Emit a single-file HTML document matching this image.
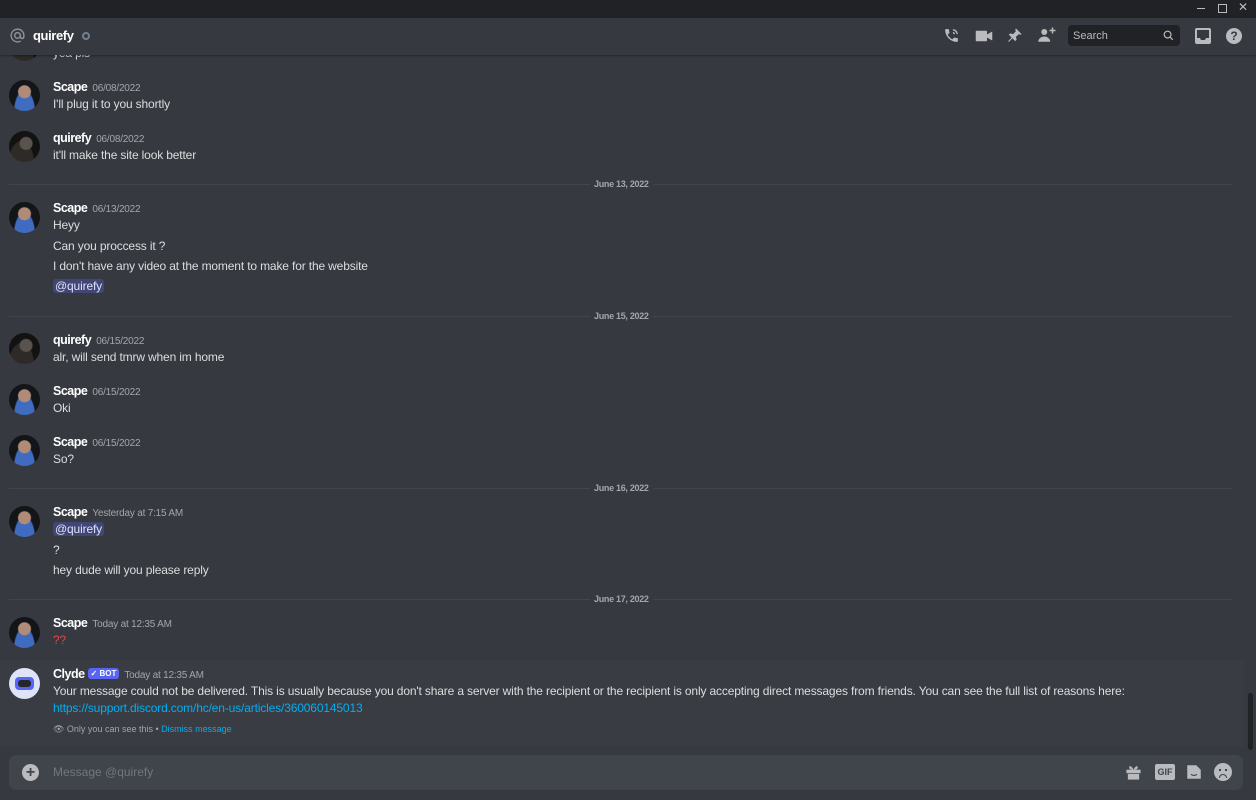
<!DOCTYPE html>
<html><head><meta charset="utf-8"><style>
*{margin:0;padding:0;box-sizing:border-box}
body{width:1256px;height:800px;background:#36393f;font-family:"Liberation Sans",sans-serif;position:relative;overflow:hidden;color:#dcddde}
.a{position:absolute}
.tb{left:0;top:0;width:1256px;height:18px;background:#202225}
.hd{left:0;top:18px;width:1256px;height:37px;background:#36393f;box-shadow:0 1px 2px rgba(0,0,0,.35);z-index:2}
.av{width:31px;height:31px;border-radius:50%;left:9px;overflow:hidden}
.sc{background:radial-gradient(circle at 50% 38%,#b08c78 0 6px,transparent 7px),radial-gradient(ellipse at 50% 105%,#3f6bc0 0 10px,transparent 11px),#141518}
.qu{background:radial-gradient(circle at 55% 40%,#5a524c 0 6px,transparent 7px),radial-gradient(ellipse at 40% 100%,#2d2a28 0 12px,transparent 13px),#121212}
.nm{font-size:12.5px;font-weight:bold;color:#fff;left:53px;letter-spacing:-.5px}
.ts{font-size:10px;color:#a3a6aa;font-weight:normal;margin-left:5px;letter-spacing:-.2px}
.tx{font-size:12px;color:#dcddde;left:53px;letter-spacing:-.15px;white-space:nowrap}
.dv{left:9px;width:1224px;height:1px;background:#42454a}
.dl{font-size:9px;font-weight:bold;color:#a3a6aa;background:#36393f;padding:0 4px;left:590px;letter-spacing:-.3px}
.mn{background:#414675;color:#dee0fc;padding:0 2px;border-radius:3px}
.ic{fill:#b9bbbe}
</style></head><body>
<div class="a tb"></div>
<div class="a" style="left:1197px;top:8px;width:8px;height:1px;background:#b9bbbe"></div>
<div class="a" style="left:1218px;top:4px;width:9px;height:9px;border:1px solid #b9bbbe"></div>
<div class="a" style="left:1238px;top:0;font-size:12px;color:#b9bbbe">✕</div>
<div class="a hd">
<svg class="a" style="left:9px;top:9px" width="17" height="17" viewBox="0 0 24 24"><path d="M12 2a10 10 0 1 0 5 18.7l-1-1.7A8 8 0 1 1 20 12v1.5a1.5 1.5 0 0 1-3 0V12a5 5 0 1 0-1.5 3.5A3.5 3.5 0 0 0 22 13.5V12A10 10 0 0 0 12 2zm0 13a3 3 0 1 1 0-6 3 3 0 0 1 0 6z" fill="#8e9297"/></svg>
<div class="a" style="left:33px;top:10px;font-size:13px;font-weight:bold;color:#fff;letter-spacing:-.4px">quirefy</div>
<div class="a" style="left:82px;top:14px;width:8px;height:8px;border-radius:50%;border:2px solid #747f8d"></div>
<svg class="a ic" style="left:943px;top:9px" width="17" height="17" viewBox="0 0 24 24"><path d="M6.6 10.8a15 15 0 0 0 6.6 6.6l2.2-2.2c.3-.3.7-.4 1-.2 1.1.4 2.3.6 3.6.6.6 0 1 .4 1 1V20c0 .6-.4 1-1 1A17 17 0 0 1 3 4c0-.6.4-1 1-1h3.5c.6 0 1 .4 1 1 0 1.3.2 2.5.6 3.6.1.3 0 .7-.2 1z"/><path d="M14 3a7 7 0 0 1 7 7h-2a5 5 0 0 0-5-5zm0 4a3 3 0 0 1 3 3h-2a1 1 0 0 0-1-1z"/></svg>
<svg class="a ic" style="left:975px;top:10px" width="18" height="16" viewBox="0 0 24 20"><rect x="1" y="3" width="15" height="14" rx="1"/><path d="M16 8l7-4v12l-7-4z"/></svg>
<svg class="a ic" style="left:1006px;top:9px" width="17" height="17" viewBox="0 0 24 24"><path d="M14 2l8 8-2 1-2-1-4 4 1 4-2 2-4-4-5 5-1-1 5-5-4-4 2-2 4 1 4-4-1-2z"/></svg>
<svg class="a ic" style="left:1037px;top:8px" width="19" height="18" viewBox="0 0 24 24"><circle cx="9" cy="8" r="4"/><path d="M1 21c0-4 4-7 8-7s8 3 8 7z"/><path d="M19 2h2v3h3v2h-3v3h-2V7h-3V5h3z"/></svg>
<div class="a" style="left:1068px;top:7px;width:112px;height:21px;background:#202225;border-radius:4px"><span class="a" style="left:5px;top:5px;font-size:11px;color:#b9bbbe">Search</span>
<svg class="a" style="left:95px;top:5px" width="11" height="11" viewBox="0 0 12 12"><circle cx="5" cy="5" r="3.7" stroke="#b9bbbe" stroke-width="1.3" fill="none"/><path d="M7.7 7.7l3 3" stroke="#b9bbbe" stroke-width="1.3"/></svg></div>
<svg class="a" style="left:1195px;top:10px" width="16" height="16" viewBox="0 0 16 16"><rect x="1" y="1" width="14" height="14" rx="1" fill="none" stroke="#b9bbbe" stroke-width="2"/><path d="M1 10h4l1 2h4l1-2h4v5H1z" fill="#b9bbbe"/></svg>
<div class="a" style="left:1226px;top:10px;width:16px;height:16px;border-radius:50%;background:#b9bbbe;color:#36393f;font-size:12px;font-weight:bold;text-align:center;line-height:16px">?</div>
</div>

<div class="a av qu" style="top:30px"></div>
<div class="a tx" style="top:46px">yea pls</div>

<div class="a av sc" style="top:80px"></div>
<div class="a nm" style="top:80px">Scape<span class="ts">06/08/2022</span></div>
<div class="a tx" style="top:97px">I'll plug it to you shortly</div>
<div class="a av qu" style="top:131px"></div>
<div class="a nm" style="top:131px">quirefy<span class="ts">06/08/2022</span></div>
<div class="a tx" style="top:148px">it'll make the site look better</div>

<div class="a dv" style="top:184px"></div><div class="a dl" style="top:179px">June 13, 2022</div>
<div class="a av sc" style="top:202px"></div>
<div class="a nm" style="top:201px">Scape<span class="ts">06/13/2022</span></div>
<div class="a tx" style="top:218px">Heyy</div>
<div class="a tx" style="top:239px">Can you proccess it ?</div>
<div class="a tx" style="top:259px">I don't have any video at the moment to make for the website</div>
<div class="a tx" style="top:279px"><span class="mn">@quirefy</span></div>

<div class="a dv" style="top:316px"></div><div class="a dl" style="top:311px">June 15, 2022</div>
<div class="a av qu" style="top:333px"></div>
<div class="a nm" style="top:333px">quirefy<span class="ts">06/15/2022</span></div>
<div class="a tx" style="top:350px">alr, will send tmrw when im home</div>
<div class="a av sc" style="top:384px"></div>
<div class="a nm" style="top:384px">Scape<span class="ts">06/15/2022</span></div>
<div class="a tx" style="top:401px">Oki</div>
<div class="a av sc" style="top:435px"></div>
<div class="a nm" style="top:435px">Scape<span class="ts">06/15/2022</span></div>
<div class="a tx" style="top:452px">So?</div>

<div class="a dv" style="top:488px"></div><div class="a dl" style="top:483px">June 16, 2022</div>
<div class="a av sc" style="top:506px"></div>
<div class="a nm" style="top:505px">Scape<span class="ts">Yesterday at 7:15 AM</span></div>
<div class="a tx" style="top:522px"><span class="mn">@quirefy</span></div>
<div class="a tx" style="top:543px">?</div>
<div class="a tx" style="top:563px">hey dude will you please reply</div>

<div class="a dv" style="top:599px"></div><div class="a dl" style="top:594px">June 17, 2022</div>
<div class="a av sc" style="top:617px"></div>
<div class="a nm" style="top:616px">Scape<span class="ts">Today at 12:35 AM</span></div>
<div class="a tx" style="top:633px;color:#ed4245">??</div>

<div class="a" style="left:0;top:660px;width:1244px;height:86px;background:#393c43"></div>
<div class="a av" style="top:668px;background:#dfe3f7"><div class="a" style="left:6px;top:9px;width:19px;height:13px;background:#5865f2;border-radius:4px"></div><div class="a" style="left:9px;top:12px;width:13px;height:7px;background:#23272a;border-radius:3px"></div></div>
<div class="a nm" style="top:667px">Clyde <span style="background:#5865f2;color:#fff;font-size:8px;padding:1px 3px;border-radius:3px;vertical-align:2px;letter-spacing:0">✓ BOT</span><span class="ts">Today at 12:35 AM</span></div>
<div class="a tx" style="top:684px">Your message could not be delivered. This is usually because you don't share a server with the recipient or the recipient is only accepting direct messages from friends. You can see the full list of reasons here:</div>
<div class="a tx" style="top:701px;color:#00aff4">https://support.discord.com/hc/en-us/articles/360060145013</div>
<div class="a" style="left:53px;top:724px;font-size:9px;color:#a3a6aa">👁 Only you can see this • <span style="color:#00aff4">Dismiss message</span></div>

<div class="a" style="left:1248px;top:693px;width:5px;height:57px;background:#202225;border-radius:3px"></div>

<div class="a" style="left:9px;top:755px;width:1234px;height:35px;background:#40444b;border-radius:7px">
<div class="a" style="left:13px;top:9px;width:17px;height:17px;border-radius:50%;background:#b9bbbe;color:#40444b;font-size:16px;font-weight:bold;text-align:center;line-height:17px">+</div>
<div class="a" style="left:44px;top:10px;font-size:12px;color:#72767d">Message @quirefy</div>
<svg class="a ic" style="left:1116px;top:9px" width="17" height="17" viewBox="0 0 24 24"><rect x="2" y="8" width="20" height="5"/><rect x="4" y="14" width="16" height="8"/><path d="M7 3c2 0 4 3 5 5-2 0-6 0-6-3 0-1 0-2 1-2zm10 0c-2 0-4 3-5 5 2 0 6 0 6-3 0-1 0-2-1-2z"/></svg>
<div class="a" style="left:1146px;top:9px;width:20px;height:16px;background:#b9bbbe;border-radius:2px;color:#40444b;font-size:9px;font-weight:bold;text-align:center;line-height:16px">GIF</div>
<svg class="a ic" style="left:1176px;top:8px" width="18" height="18" viewBox="0 0 24 24"><path d="M3 3h12l6 6v12H3z"/><path d="M8 15c2 2 6 2 8 0" stroke="#40444b" stroke-width="1.5" fill="none"/></svg>
<div class="a" style="left:1205px;top:8px;width:18px;height:18px;border-radius:50%;background:#b9bbbe"><div class="a" style="left:5px;top:6px;width:2px;height:2px;background:#40444b"></div><div class="a" style="left:11px;top:6px;width:2px;height:2px;background:#40444b"></div><div class="a" style="left:5px;top:11px;width:8px;height:4px;border:1.5px solid #40444b;border-bottom:none;border-radius:4px 4px 0 0"></div></div>
</div>
</body></html>
